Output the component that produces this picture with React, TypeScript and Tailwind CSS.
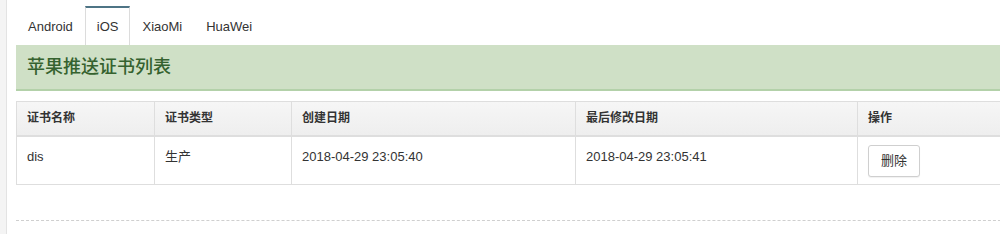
import React from "react";

const TABS = ["Android", "iOS", "XiaoMi", "HuaWei"];

const COLUMNS = [
  { title: "证书名称", width: "w-[138px]" },
  { title: "证书类型", width: "w-[137px]" },
  { title: "创建日期", width: "w-[284px]" },
  { title: "最后修改日期", width: "w-[282px]" },
  { title: "操作", width: "" },
];

export default function App() {
  const active = "iOS";

  return (
    <div
      className="flex h-[234px] w-[1000px] overflow-hidden bg-white text-[#333]"
      style={{ fontFamily: '"Liberation Sans", "Noto Sans CJK SC", sans-serif' }}
    >
      {/* left sidebar edge */}
      <div className="w-[7px] shrink-0 border-r border-[#e3e3e3] bg-[#f4f4f4]" />

      <div className="ml-[9px] w-[1000px] shrink-0 pt-[6px]">
        {/* tabs */}
        <div className="flex h-[39px] items-stretch text-[13px]">
          {TABS.map((tab) => (
            <div
              key={tab}
              className={`flex items-center px-[11px] ${
                tab === active
                  ? "border-x border-t-2 border-x-[#dcdcdc] border-t-[#4e7485] bg-white"
                  : "border-x border-t-2 border-transparent"
              }`}
            >
              {tab}
            </div>
          ))}
        </div>

        {/* panel header */}
        <div className="flex h-[46px] items-center border-b-2 border-[#b3d1a9] bg-[#cfe0c6] pl-[11px] text-[18px] font-medium text-[#35622f]">
          苹果推送证书列表
        </div>

        {/* table */}
        <table className="mt-[10px] w-full border-collapse text-[13px]">
          <thead>
            <tr className="h-[34px] bg-gradient-to-b from-[#f6f6f6] to-[#eeeeee]">
              {COLUMNS.map((col) => (
                <th
                  key={col.title}
                  className={`${col.width} border border-b-2 border-[#dedede] px-[10px] text-left text-[12px] font-semibold`}
                >
                  {col.title}
                </th>
              ))}
            </tr>
          </thead>
          <tbody>
            <tr className="h-[49px] align-top">
              <td className="border border-[#dedede] px-[10px] pt-[10px]">dis</td>
              <td className="border border-[#dedede] px-[10px] pt-[10px]">生产</td>
              <td className="border border-[#dedede] px-[10px] pt-[10px]">2018-04-29 23:05:40</td>
              <td className="border border-[#dedede] px-[10px] pt-[10px]">2018-04-29 23:05:41</td>
              <td className="border border-[#dedede] px-[10px] pt-[8px]">
                <button className="h-[32px] w-[52px] rounded-[3px] border border-[#cfcfcf] bg-white text-[13px] text-[#333] shadow-[0_1px_1px_rgba(0,0,0,0.06)]">
                  删除
                </button>
              </td>
            </tr>
          </tbody>
        </table>

        {/* divider */}
        <div className="mt-[35px] border-t border-dashed border-[#cfcfcf]" />
      </div>
    </div>
  );
}
